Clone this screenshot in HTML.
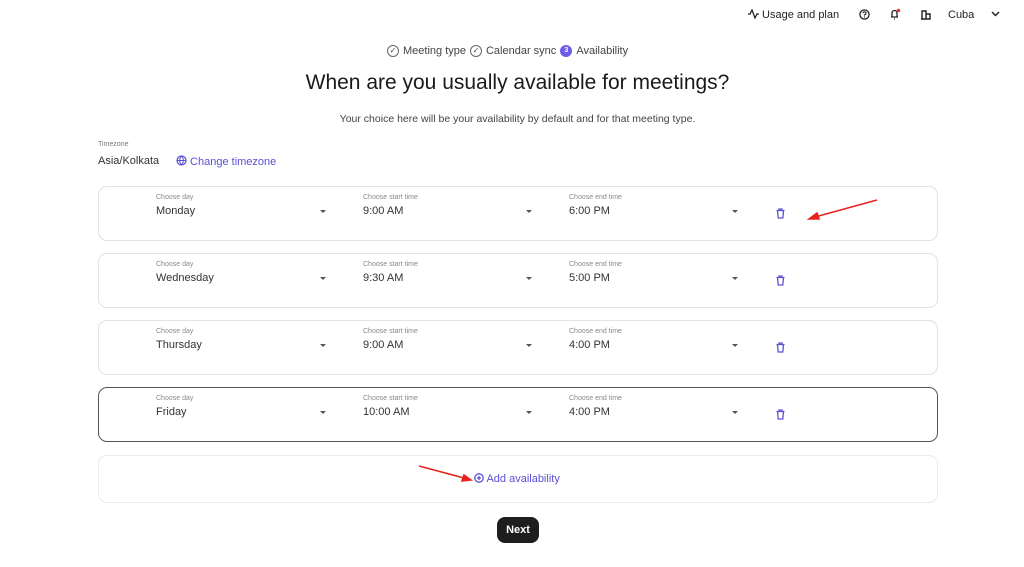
<!DOCTYPE html>
<html><head><meta charset="utf-8"><style>
*{margin:0;padding:0;box-sizing:border-box}
body{width:1024px;height:567px;background:#fff;font-family:"Liberation Sans",sans-serif;color:#222;position:relative;overflow:hidden}
.a{position:absolute;white-space:nowrap}
.box{position:absolute;left:98px;width:840px;height:55px;border:1px solid #e2e2e2;border-radius:9px}
.lbl{position:absolute;font-size:7px;color:#888;top:7px}
.val{position:absolute;font-size:11px;color:#333;top:18px}
.car{position:absolute;top:23px;width:0;height:0;border-left:3.5px solid transparent;border-right:3.5px solid transparent;border-top:3.5px solid #555}
.tr{position:absolute;left:677px;top:21px}
.step{position:absolute;top:45px;left:387px;display:flex;align-items:center;font-size:11px;color:#444;gap:4px}
.ck{display:inline-block;width:12px;height:12px;border:1px solid #666;border-radius:50%;text-align:center;font-size:8px;line-height:10px}
</style></head><body>
<div class="a" style="left:748px;top:9px;font-size:11px;color:#222">
<svg width="11" height="10" viewBox="0 0 11 10" style="vertical-align:-1px"><path d="M0 5h2l2-4 3 8 2-4h2" fill="none" stroke="#222" stroke-width="1.3"/></svg>
 Usage and plan</div>
<svg class="a" style="left:859px;top:9px" width="11" height="11" viewBox="0 0 11 11"><circle cx="5.5" cy="5.5" r="4.6" fill="none" stroke="#222" stroke-width="1.3"/><path d="M4 4.3a1.5 1.5 0 1 1 1.5 1.5v.8" fill="none" stroke="#222" stroke-width="1.1"/><circle cx="5.5" cy="8" r=".6" fill="#222"/></svg>
<svg class="a" style="left:889px;top:8px" width="12" height="12" viewBox="0 0 12 12"><path d="M2 9h7M3 9V5a2.5 2.5 0 0 1 5 0v4M5 11h1" fill="none" stroke="#222" stroke-width="1.3"/><circle cx="9.5" cy="2.5" r="1.8" fill="#e53935"/></svg>
<svg class="a" style="left:921px;top:10px" width="11" height="10" viewBox="0 0 11 10"><path d="M1 9V1h4v8M5 4h4v5H0" fill="none" stroke="#222" stroke-width="1.4"/></svg>
<div class="a" style="left:948px;top:9px;font-size:11px">Cuba</div>
<svg class="a" style="left:991px;top:11px" width="9" height="6" viewBox="0 0 9 6"><path d="M1 1l3.5 3.5L8 1" fill="none" stroke="#222" stroke-width="1.5"/></svg>

<div class="step">
<span class="ck">✓</span><span>Meeting type</span>
<span class="ck">✓</span><span>Calendar sync</span>
<span class="ck" style="background:#6c5ce7;border-color:#6c5ce7;color:#fff;font-size:7px;font-weight:bold">3</span><span>Availability</span></div>
<div class="a" style="left:0;width:1035px;text-align:center;top:71px;font-size:21px;color:#1a1a1a">When are you usually available for meetings?</div>
<div class="a" style="left:0;width:1035px;text-align:center;top:113px;font-size:10.5px;color:#444">Your choice here will be your availability by default and for that meeting type.</div>
<div class="a" style="left:98px;top:141px;font-size:7px;color:#777">Timezone</div>
<div class="a" style="left:98px;top:155px;font-size:11px;color:#333">Asia/Kolkata</div>
<div class="a" style="left:176px;top:155px;font-size:11px;color:#5b4fd6">
<svg width="11" height="11" viewBox="0 0 11 11" style="vertical-align:-1px"><circle cx="5.5" cy="5.5" r="4.5" fill="none" stroke="#5b4fd6" stroke-width="1.2"/><path d="M1 5.5h9M5.5 1c-2.4 2.6-2.4 6.4 0 9M5.5 1c2.4 2.6 2.4 6.4 0 9" fill="none" stroke="#5b4fd6" stroke-width="1"/></svg> Change timezone</div>

<div class="box" style="top:186px"><div class="lbl" style="left:57px">Choose day</div><div class="val" style="left:57px">Monday</div><div class="car" style="left:221px"></div><div class="lbl" style="left:264px">Choose start time</div><div class="val" style="left:264px">9:00 AM</div><div class="car" style="left:427px"></div><div class="lbl" style="left:470px">Choose end time</div><div class="val" style="left:470px">6:00 PM</div><div class="car" style="left:633px"></div><svg class="tr" width="9" height="11" viewBox="0 0 9 11"><path d="M0.5 2.5h8M3 2.5V1h3v1.5M1.5 2.5l.7 7.5h4.6l.7-7.5" fill="none" stroke="#5b4fd6" stroke-width="1.3"/></svg></div>
<div class="box" style="top:253px"><div class="lbl" style="left:57px">Choose day</div><div class="val" style="left:57px">Wednesday</div><div class="car" style="left:221px"></div><div class="lbl" style="left:264px">Choose start time</div><div class="val" style="left:264px">9:30 AM</div><div class="car" style="left:427px"></div><div class="lbl" style="left:470px">Choose end time</div><div class="val" style="left:470px">5:00 PM</div><div class="car" style="left:633px"></div><svg class="tr" width="9" height="11" viewBox="0 0 9 11"><path d="M0.5 2.5h8M3 2.5V1h3v1.5M1.5 2.5l.7 7.5h4.6l.7-7.5" fill="none" stroke="#5b4fd6" stroke-width="1.3"/></svg></div>
<div class="box" style="top:320px"><div class="lbl" style="left:57px">Choose day</div><div class="val" style="left:57px">Thursday</div><div class="car" style="left:221px"></div><div class="lbl" style="left:264px">Choose start time</div><div class="val" style="left:264px">9:00 AM</div><div class="car" style="left:427px"></div><div class="lbl" style="left:470px">Choose end time</div><div class="val" style="left:470px">4:00 PM</div><div class="car" style="left:633px"></div><svg class="tr" width="9" height="11" viewBox="0 0 9 11"><path d="M0.5 2.5h8M3 2.5V1h3v1.5M1.5 2.5l.7 7.5h4.6l.7-7.5" fill="none" stroke="#5b4fd6" stroke-width="1.3"/></svg></div>
<div class="box" style="top:387px;border-color:#555"><div class="lbl" style="left:57px">Choose day</div><div class="val" style="left:57px">Friday</div><div class="car" style="left:221px"></div><div class="lbl" style="left:264px">Choose start time</div><div class="val" style="left:264px">10:00 AM</div><div class="car" style="left:427px"></div><div class="lbl" style="left:470px">Choose end time</div><div class="val" style="left:470px">4:00 PM</div><div class="car" style="left:633px"></div><svg class="tr" width="9" height="11" viewBox="0 0 9 11"><path d="M0.5 2.5h8M3 2.5V1h3v1.5M1.5 2.5l.7 7.5h4.6l.7-7.5" fill="none" stroke="#5b4fd6" stroke-width="1.3"/></svg></div>
<div class="box" style="top:455px;height:48px;border-color:#ececec"></div>
<div class="a" style="left:474px;top:473px;font-size:11px;color:#5b4fd6">
<svg width="10" height="10" viewBox="0 0 10 10" style="vertical-align:-1px"><circle cx="5" cy="5" r="4.2" fill="none" stroke="#5b4fd6" stroke-width="1.3"/><path d="M5 3v4M3 5h4" stroke="#5b4fd6" stroke-width="1.3"/></svg> Add availability</div>
<div class="a" style="left:497px;top:517px;width:42px;height:26px;background:#1e1e1e;border-radius:8px;color:#fff;font-size:11px;font-weight:bold;text-align:center;line-height:26px">Next</div>
<svg class="a" style="left:0;top:0" width="1024" height="567"><g stroke="#e8231f" stroke-width="1.6" fill="#e8231f"><line x1="877" y1="200" x2="815" y2="217"/><path d="M809 219l8-6 2 6z"/><line x1="419" y1="466" x2="464" y2="478"/><path d="M471 480l-9 1 2-6z"/></g></svg>
</body></html>
